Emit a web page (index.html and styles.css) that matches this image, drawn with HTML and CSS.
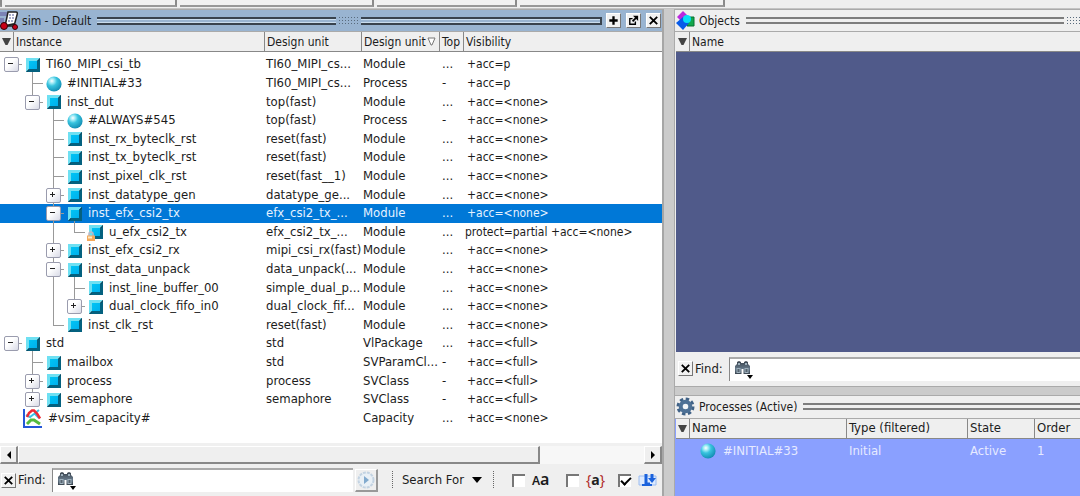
FILE: index.html
```html
<!DOCTYPE html>
<html lang="en">
<head>
<meta charset="utf-8">
<title>sim - Default</title>
<link rel="stylesheet" href="styles.css">
</head>
<body>
<svg class="defs" aria-hidden="true">
  <defs>
    <linearGradient id="face" x1="0" y1="0" x2="1" y2="1"><stop offset="0" stop-color="#00c4f4"/><stop offset="1" stop-color="#00b0ee"/></linearGradient>
    <radialGradient id="ball" cx=".36" cy=".3" r=".75"><stop offset="0" stop-color="#fff"/><stop offset=".22" stop-color="#9be9f5"/><stop offset=".45" stop-color="#38c3de"/><stop offset="1" stop-color="#1089b0"/></radialGradient>
    <linearGradient id="steel" x1="0" y1="0" x2="0" y2="1"><stop offset="0" stop-color="#39424c"/><stop offset=".6" stop-color="#66798a"/><stop offset="1" stop-color="#3a444e"/></linearGradient>
  </defs>
  <symbol id="cube" viewBox="0 0 14 14"><path fill="#6fe0f2" d="M0 0h14l-3 3H3v8l-3 3z"/><path fill="#04617f" d="M14 0v14H0l3-3h8V3z"/><path fill="#0a3b50" d="M0 14l3-3v1l-2 2zM14 0l-3 3h1l2-2z"/><path fill="url(#face)" d="M3 3h8v8H3z"/></symbol>
  <symbol id="sphere" viewBox="0 0 16 16"><circle cx="8" cy="8" r="7.6" fill="url(#ball)"/></symbol>
  <symbol id="lock" viewBox="0 0 10 10"><path d="M3 5V3a2 2 0 014 0v2" fill="none" stroke="#b9b9c9" stroke-width="1.6"/><path fill="#f5a95b" d="M1 4.5h8V10H1z"/><path fill="#ffe9c0" d="M2 5.5h4v2H2z"/></symbol>
  <symbol id="chart" viewBox="0 0 19 19"><path d="M1 0v18h18" fill="none" stroke="#2458d8" stroke-width="2"/><path d="M3 6l4 2 4-3 5-4M11 4l5 5" fill="none" stroke="#39c3e6" stroke-width="2"/><path d="M4 8l2-4 3-2.500h2l3 3 3 5" fill="none" stroke="#ee2a35" stroke-width="2.500"/><path d="M4 15l4-4h3l6 4" fill="none" stroke="#55bb3f" stroke-width="3"/></symbol>
  <symbol id="binoculars" viewBox="0 0 19 20"><path fill="url(#steel)" d="M3 2l2-1 2 1v1h3V2l2-1 2 1v2l2 2v8H9.500V9h-2v5H1V6l2-2z"/><path fill="#9fb1bd" d="M2.500 8h4v5h-4zM10.500 8h4v5h-4zM4 3h2v2H4zM11 3h2v2h-2z"/><path fill="#56636e" d="M3.500 9h2v3h-2zM11.500 9h2v3h-2z"/><path fill="#000" d="M13 15h6l-3 4z"/></symbol>
  <symbol id="cross" viewBox="0 0 14 14"><path d="M3 3l8 8M11 3l-8 8" stroke="#000" stroke-width="2"/></symbol>
  <symbol id="down" viewBox="0 0 9 9"><path fill="#444" d="M0 1h9L5.500 8h-2z"/></symbol>
</svg>

<div class="toolbars"><span class="bar b1"></span><span class="bar b2"></span><span class="bar b3"></span><span class="bar b4"></span><span class="bar b5"></span></div>

<main class="workspace">
  <section class="pane sim">
    <header class="title active">
      <svg class="title-icon" viewBox="0 0 19 19"><path fill="#7b83b5" d="M0 1h7v4H0zM0 7h4v5H0z"/><path fill="#fff" stroke="#222" stroke-width="1.500" d="M8 1h8q2 0 1 3l-3 11H5l2-9z"/><path d="M9 4h5M9 7h5M8 10h5" stroke="#8b92bb" stroke-width="1.500" stroke-dasharray="2 1"/><path d="M5 15l9-2" stroke="#222" stroke-width="2"/><circle cx="4" cy="15" r="3.500" fill="#c80018" stroke="#310008"/><circle cx="15" cy="16" r="2.500" fill="#c80018" stroke="#310008"/></svg>
      <h2>sim - Default</h2>
      <span class="groove"></span><span class="dots"></span><span class="groove"></span>
      <span class="window-buttons">
        <button aria-label="Zoom pane"><svg viewBox="0 0 14 14"><path d="M7 2.500v9M2.500 7h9" stroke="#000" stroke-width="2.500"/></svg></button>
        <button aria-label="Undock"><svg viewBox="0 0 14 14"><path d="M6 5H3v6h6V8" fill="none" stroke="#000" stroke-width="1.500"/><path d="M6 8l4-4" stroke="#000" stroke-width="2"/><path d="M6.500 2H12v5.500z"/></svg></button>
        <button aria-label="Close"><svg><use href="#cross"/></svg></button>
      </span>
    </header>
    <div class="sheet">
      <table class="tree">
        <colgroup><col class="c-mark"><col class="c-inst"><col class="c-unit"><col class="c-type"><col class="c-top"><col></colgroup>
        <thead><tr><th><svg class="mark"><use href="#down"/></svg></th><th>Instance</th><th>Design unit</th><th><span class="sorted">Design unit<svg viewBox="0 0 9 9"><path d="M1 1h7L5 8H4z" fill="#fff" stroke="#777"/></svg></span></th><th>Top</th><th>Visibility</th></tr></thead>
        <tbody>
          <tr><td colspan="2"><div class="node"><button class="tog minus last" aria-label="Collapse"></button><i class="ic open"><svg><use href="#cube"/></svg></i>TI60_MIPI_csi_tb</div></td><td>TI60_MIPI_cs...</td><td>Module</td><td>...</td><td>+acc=p</td></tr>
          <tr><td colspan="2"><div class="node"><i></i><i class="tee"></i><i class="ic ball"><svg><use href="#sphere"/></svg></i>#INITIAL#33</div></td><td>TI60_MIPI_cs...</td><td>Process</td><td>-</td><td>+acc=p</td></tr>
          <tr><td colspan="2"><div class="node"><i></i><button class="tog minus end" aria-label="Collapse"></button><i class="ic open"><svg><use href="#cube"/></svg></i>inst_dut</div></td><td>top(fast)</td><td>Module</td><td>...</td><td>+acc=&lt;none&gt;</td></tr>
          <tr><td colspan="2"><div class="node"><i></i><i></i><i class="tee"></i><i class="ic ball"><svg><use href="#sphere"/></svg></i>#ALWAYS#545</div></td><td>top(fast)</td><td>Process</td><td>-</td><td>+acc=&lt;none&gt;</td></tr>
          <tr><td colspan="2"><div class="node"><i></i><i></i><i class="tee"></i><i class="ic"><svg><use href="#cube"/></svg></i>inst_rx_byteclk_rst</div></td><td>reset(fast)</td><td>Module</td><td>...</td><td>+acc=&lt;none&gt;</td></tr>
          <tr><td colspan="2"><div class="node"><i></i><i></i><i class="tee"></i><i class="ic"><svg><use href="#cube"/></svg></i>inst_tx_byteclk_rst</div></td><td>reset(fast)</td><td>Module</td><td>...</td><td>+acc=&lt;none&gt;</td></tr>
          <tr><td colspan="2"><div class="node"><i></i><i></i><i class="tee"></i><i class="ic"><svg><use href="#cube"/></svg></i>inst_pixel_clk_rst</div></td><td>reset(fast__1)</td><td>Module</td><td>...</td><td>+acc=&lt;none&gt;</td></tr>
          <tr><td colspan="2"><div class="node"><i></i><i></i><button class="tog plus tee" aria-label="Expand"></button><i class="ic"><svg><use href="#cube"/></svg></i>inst_datatype_gen</div></td><td>datatype_ge...</td><td>Module</td><td>...</td><td>+acc=&lt;none&gt;</td></tr>
          <tr class="selected"><td colspan="2"><div class="node"><i></i><i></i><button class="tog minus tee" aria-label="Collapse"></button><i class="ic open"><svg><use href="#cube"/></svg></i>inst_efx_csi2_tx</div></td><td>efx_csi2_tx_...</td><td>Module</td><td>...</td><td>+acc=&lt;none&gt;</td></tr>
          <tr><td colspan="2"><div class="node"><i></i><i></i><i class="pass"></i><i class="end"></i><i class="ic"><svg><use href="#cube"/></svg><svg class="lock"><use href="#lock"/></svg></i>u_efx_csi2_tx</div></td><td>efx_csi2_tx_...</td><td>Module</td><td>...</td><td class="wide">protect=partial +acc=&lt;none&gt;</td></tr>
          <tr><td colspan="2"><div class="node"><i></i><i></i><button class="tog plus tee" aria-label="Expand"></button><i class="ic"><svg><use href="#cube"/></svg></i>inst_efx_csi2_rx</div></td><td>mipi_csi_rx(fast)</td><td>Module</td><td>...</td><td>+acc=&lt;none&gt;</td></tr>
          <tr><td colspan="2"><div class="node"><i></i><i></i><button class="tog minus tee" aria-label="Collapse"></button><i class="ic open"><svg><use href="#cube"/></svg></i>inst_data_unpack</div></td><td>data_unpack(...</td><td>Module</td><td>...</td><td>+acc=&lt;none&gt;</td></tr>
          <tr><td colspan="2"><div class="node"><i></i><i></i><i class="pass"></i><i class="tee"></i><i class="ic"><svg><use href="#cube"/></svg></i>inst_line_buffer_00</div></td><td>simple_dual_p...</td><td>Module</td><td>...</td><td>+acc=&lt;none&gt;</td></tr>
          <tr><td colspan="2"><div class="node"><i></i><i></i><i class="pass"></i><button class="tog plus end" aria-label="Expand"></button><i class="ic"><svg><use href="#cube"/></svg></i>dual_clock_fifo_in0</div></td><td>dual_clock_fif...</td><td>Module</td><td>...</td><td>+acc=&lt;none&gt;</td></tr>
          <tr><td colspan="2"><div class="node"><i></i><i></i><i class="end"></i><i class="ic"><svg><use href="#cube"/></svg></i>inst_clk_rst</div></td><td>reset(fast)</td><td>Module</td><td>...</td><td>+acc=&lt;none&gt;</td></tr>
          <tr><td colspan="2"><div class="node"><button class="tog minus last" aria-label="Collapse"></button><i class="ic open"><svg><use href="#cube"/></svg></i>std</div></td><td>std</td><td>VlPackage</td><td>...</td><td>+acc=&lt;full&gt;</td></tr>
          <tr><td colspan="2"><div class="node"><i></i><i class="tee"></i><i class="ic"><svg><use href="#cube"/></svg></i>mailbox</div></td><td>std</td><td>SVParamCl...</td><td>-</td><td>+acc=&lt;full&gt;</td></tr>
          <tr><td colspan="2"><div class="node"><i></i><button class="tog plus tee" aria-label="Expand"></button><i class="ic"><svg><use href="#cube"/></svg></i>process</div></td><td>process</td><td>SVClass</td><td>-</td><td>+acc=&lt;full&gt;</td></tr>
          <tr><td colspan="2"><div class="node"><i></i><button class="tog plus end" aria-label="Expand"></button><i class="ic"><svg><use href="#cube"/></svg></i>semaphore</div></td><td>semaphore</td><td>SVClass</td><td>-</td><td>+acc=&lt;full&gt;</td></tr>
          <tr><td colspan="2"><div class="node"><i></i><i class="ic chart"><svg><use href="#chart"/></svg></i>#vsim_capacity#</div></td><td></td><td>Capacity</td><td>...</td><td>+acc=&lt;none&gt;</td></tr>
        </tbody>
      </table>
    </div>
    <div class="scroll">
      <button aria-label="Scroll left"><svg viewBox="0 0 8 8"><path d="M6 0v8L2 4z"/></svg></button><span class="thumb"></span><span class="track"></span><button aria-label="Scroll right"><svg viewBox="0 0 8 8"><path d="M2 0v8l4-4z"/></svg></button>
    </div>
    <div class="find">
      <button class="close" aria-label="Close find"><svg><use href="#cross"/></svg></button>
      <label for="find-sim">Find:</label>
      <span class="field"><svg><use href="#binoculars"/></svg><input type="text" id="find-sim"></span>
      <button class="go" aria-label="Find next"><svg viewBox="0 0 18 18"><circle cx="9" cy="9" r="7.500" fill="#e9f0f6" stroke="#c3d3e2" stroke-width="2" stroke-dasharray="3 1"/><path fill="#82aace" d="M7 5l5 4-5 4z"/></svg></button>
      <span class="sep"></span>
      <button class="search-for">Search For<svg viewBox="0 0 10 6"><path d="M0 0h10L5 6z"/></svg></button>
      <span class="sep"></span>
      <label class="opt"><input type="checkbox" aria-label="Match case"><span class="case"><small>A</small>a</span></label>
      <label class="opt"><input type="checkbox" aria-label="Regular expression"><span class="regex"><em>{</em>a<em>}</em></span></label>
      <label class="opt"><input type="checkbox" checked aria-label="Wrap search"><svg class="wrap" viewBox="0 0 19 14"><path fill="#dceaff" stroke="#9bbcf0" d="M1 3h17v9H1z"/><path d="M8 1v10h4" fill="none" stroke="#1b62dc" stroke-width="3"/><path d="M4 12h10" stroke="#1b62dc" stroke-width="2"/><path d="M14 1v6" stroke="#1b62dc" stroke-width="3"/><path fill="#1b62dc" d="M10 5h8l-4 5z"/></svg></label>
    </div>
  </section>

  <div class="right">
    <section class="pane objects">
      <header class="title">
        <svg class="title-icon" viewBox="0 0 19 19"><path fill="#bb28dd" d="M7 0l6 6-6 6-6-6z"/><path fill="#13a84b" stroke="#087030" d="M11 6h7v9h-7z"/><path fill="#075be9" d="M7 6l6 6-6 7-7-7z"/><circle cx="11" cy="8" r="4" fill="#08dff5"/></svg>
        <h2>Objects</h2><span class="groove"></span><span class="dots short"></span>
      </header>
      <table class="list"><colgroup><col class="c-mark"><col></colgroup><thead><tr><th><svg class="mark"><use href="#down"/></svg></th><th>Name</th></tr></thead></table>
      <div class="canvas"></div>
      <div class="find">
        <button class="close" aria-label="Close find"><svg><use href="#cross"/></svg></button>
        <label for="find-obj">Find:</label>
        <span class="field"><svg><use href="#binoculars"/></svg><input type="text" id="find-obj"></span>
      </div>
    </section>
    <section class="pane processes">
      <header class="title">
        <svg class="title-icon" viewBox="0 0 19 19"><circle cx="9.500" cy="9.500" r="7.500" fill="none" stroke="#3f6186" stroke-width="3" stroke-dasharray="3.400 2.490"/><circle cx="9.500" cy="9.500" r="4.800" fill="#dce5ee" stroke="#4d7095" stroke-width="4"/><circle cx="9.500" cy="9.500" r="2.500" fill="#f4f6f8"/></svg>
        <h2>Processes (Active)</h2><span class="groove"></span>
      </header>
      <table class="list">
        <colgroup><col class="c-mark"><col class="p-name"><col class="p-type"><col class="p-state"><col></colgroup>
        <thead><tr><th><svg class="mark"><use href="#down"/></svg></th><th>Name</th><th>Type (filtered)</th><th>State</th><th>Order</th></tr></thead>
        <tbody><tr><td></td><td><div class="proc"><svg><use href="#sphere"/></svg>#INITIAL#33</div></td><td>Initial</td><td>Active</td><td>1</td></tr></tbody>
      </table>
    </section>
  </div>
</main>
</body>
</html>
```
FILE: styles.css
```css
* { box-sizing: border-box; }
body { margin: 0; height: 100vh; display: flex; flex-direction: column; overflow: hidden; background: #efefef; color: #1c1c1c; font: 12px/16px "DejaVu Sans Condensed", "Noto Sans", sans-serif; }
.defs { position: absolute; width: 0; height: 0; }
svg { display: block; flex: none; }
button { font: inherit; color: inherit; padding: 0; border: 0; background: none; }

.toolbars { display: flex; height: 9px; flex: none; gap: 3px; align-items: flex-start; border-bottom: 1px solid #c4c4c4; }
.bar { height: 7px; border-right: 2px solid #8a8a8a; border-bottom: 2px solid #999; background: #f2f2f2; }
.b1 { width: 2px; } .b2 { width: 172px; } .b3 { width: 194px; } .b4 { width: 140px; } .b5 { width: 205px; }

.workspace { flex: 1; min-height: 0; display: grid; grid-template-columns: 664fr 10px 406fr; background: #cbcbcb; }
.workspace > .right { grid-column: 3; }
.pane { display: flex; flex-direction: column; min-width: 0; background: #efefef; border-top: 1px solid #aaa; }
.sim { border-right: 2px solid #a6a6a6; }
.title { display: flex; align-items: center; height: 22px; flex: none; border-bottom: 1px solid #aaa; padding-left: 2px; }
.title h2 { margin: 0 6px 0 4px; font-size: 12px; font-weight: normal; white-space: nowrap; }
.title-icon { width: 19px; height: 19px; }
.active { background: #99b4d1; padding: 0 1px 0 0; }
.active h2 { margin-left: 3px; }
.groove { flex: 1; height: 7px; border: solid #7d7d7d; border-width: 2px 0; }
.active .groove { height: 8px; border-color: #39434e; border-right: 2px solid #39434e; background: linear-gradient(#c9dced 1px, transparent 1px, transparent 3px, #c9dced 3px); }
.active h2 + .groove { border-right: 0; }
.dots { width: 21px; height: 9px; margin: 0 2px; background: radial-gradient(circle, #596b7d 1px, transparent 1px) 0 0 / 3px 3px; }
.dots.short { width: 14px; margin-right: 0; }
.window-buttons { display: flex; gap: 5px; margin-left: 4px; }
.window-buttons button, .close { width: 15px; height: 15px; background: #f1f1f1; border: solid #fff; border-width: 1px; border-right-color: #777; border-bottom-color: #777; }
.window-buttons svg, .close svg { width: 13px; height: 13px; }

table { width: 100%; border-collapse: separate; border-spacing: 0; table-layout: fixed; flex: none; }
th { height: 20px; padding: 0 0 0 2px; font-weight: normal; text-align: left; white-space: nowrap; background: #efefef; border-left: 1px solid #888; border-bottom: 1px solid #888; }
th:first-child { border-left: 0; }
td { padding: 0 0 0 3px; white-space: nowrap; }
.c-mark { width: 13px; } .c-inst { width: 251px; } .c-unit { width: 97px; } .c-type { width: 78px; } .c-top { width: 24px; }
.mark { width: 9px; height: 9px; }
.sorted { display: flex; align-items: center; gap: 1px; }
.sorted svg { width: 9px; height: 9px; }

.sheet { flex: 1; min-height: 0; overflow: hidden; background: #fff; }
.tree tbody::before { content: ""; display: block; height: 3px; }
.tree tbody td { height: 19px; line-height: 18px; font-size: 13px; vertical-align: top; }
.tree tbody tr:nth-child(5n+3) td, .tree tbody tr:nth-child(5n) td { height: 18px; }
.tree tbody td:first-child { padding: 0 0 0 1px; height: 1px; }
.tree tbody td:nth-child(2) { padding-left: 2px; }
.tree tbody td:nth-child(3) { padding-left: 2px; }
.tree tbody td:nth-child(5) { padding-left: 4px; font-size: 12px; }
.tree tbody td.wide:last-child { padding-left: 2px; }
.tree tbody .selected td { color: #e6f2ff; background: #0078d7; }
.node { display: flex; align-items: stretch; height: 18px; }
.tree tbody tr:not(:nth-child(5n+3)):not(:nth-child(5n)) .node { height: 19px; }
.node > i, .tog { flex: none; width: 21px; position: relative; }
.node > .ic { display: flex; align-items: center; justify-content: center; width: 21px; margin-right: 3px; }
.ic svg { width: 14px; height: 14px; position: relative; }
.ic.ball svg { width: 16px; height: 16px; }
.node > .ic.chart { margin-right: 5px; }
.ic.chart svg { width: 19px; height: 19px; }
.ic svg.lock { position: absolute; width: 10px; height: 10px; left: 1px; bottom: 0; }
.pass { background: linear-gradient(#999, #999) 10px 0 / 1px 100% no-repeat; }
.tee { background: linear-gradient(#999, #999) 10px 0 / 1px 100% no-repeat, linear-gradient(#999, #999) 10px 9px / 11px 1px no-repeat; }
.end { background: linear-gradient(#999, #999) 10px 0 / 1px 10px no-repeat, linear-gradient(#999, #999) 10px 9px / 11px 1px no-repeat; }
.last { background: linear-gradient(#999, #999) 10px 9px / 14px 1px no-repeat; }
.open { background: linear-gradient(#999, #999) 10px 10px / 1px 10px no-repeat; }
.tog { display: flex; align-items: center; justify-content: center; }
.tog::before { content: ""; width: 13px; height: 13px; border: 1px solid #9a9cae; border-radius: 2px; background: linear-gradient(#222, #222) 3px 5px / 5px 1px no-repeat, linear-gradient(135deg, #fff 40%, #d8dae6); }
.tog.plus::before { background: linear-gradient(#222, #222) 3px 5px / 5px 1px no-repeat, linear-gradient(#222, #222) 5px 3px / 1px 5px no-repeat, linear-gradient(135deg, #fff 40%, #d8dae6); }

.scroll { display: flex; height: 21px; flex: none; border-top: 3px solid #f0f0f0; background: #f7f7f7; }
.scroll button { width: 18px; display: flex; align-items: center; justify-content: center; background: #efefef; border: 1px solid #fff; border-right: 2px solid #888; border-bottom: 2px solid #888; }
.scroll svg { width: 8px; height: 8px; }
.thumb { flex: 521; background: #efefef; border: 1px solid #fff; border-right: 2px solid #888; border-bottom: 2px solid #888; }
.track { flex: 105; }

.find { display: flex; align-items: center; height: 32px; flex: none; padding-left: 1px; font-size: 13px; }
.find > label { margin-left: 2px; }
.field { flex: 1; min-width: 0; display: flex; align-items: center; height: 24px; margin-left: 6px; background: #fff; border-top: 2px solid #aaa; border-left: 1px solid #888; }
.field svg { width: 19px; height: 20px; margin-left: 4px; }
.field input { flex: 1; min-width: 0; border: 0; outline: 0; background: none; font: inherit; }
.go { display: flex; align-items: center; justify-content: center; width: 23px; height: 23px; margin: 0 14px 0 2px; border: 1px solid #fff; border-right: 2px solid #999; border-bottom: 2px solid #999; }
.go svg { width: 18px; height: 18px; }
.sep { width: 1px; height: 18px; background: repeating-linear-gradient(#666 0 1px, transparent 1px 2px); }
.search-for { display: flex; align-items: center; gap: 8px; margin: 0 11px 0 9px; white-space: nowrap; }
.search-for svg { width: 10px; height: 6px; }
.find .opt { display: flex; align-items: center; gap: 7px; width: 40px; margin-left: 18px; }
.opt input { appearance: none; flex: none; width: 13px; height: 13px; margin: 0; background: #fff; border: solid #777; border-width: 2px 0 0 2px; }
.opt input:checked::before { content: ""; display: block; width: 8px; height: 4px; margin: 1px; border: solid #000; border-width: 0 0 2px 2px; transform: rotate(-45deg); }
.find .opt + .opt { margin-left: 14px; }
.find .opt:last-child { width: 44px; margin-left: 12px; }
.case { font: 600 16px/16px "Noto Sans", sans-serif; }
.case small { font-size: 12px; }
.regex { font: bold 14px/16px "Noto Sans", sans-serif; color: #222; }
.regex em { font-style: normal; font-weight: normal; color: #b02a2a; }
.wrap { width: 19px; height: 14px; }

.right { display: flex; flex-direction: column; min-width: 0; border-left: 1px solid #aaa; }
.right .title { padding-left: 1px; }
.objects { flex: 378; border-bottom: 1px solid #aaa; }
.objects .find { height: 34px; padding-left: 3px; }
.list, .canvas { margin-left: 1px; }
.list { width: calc(100% - 1px); }
.canvas { flex: 1; background: #505a8a; }
.processes { flex: 101; margin-top: 8px; background: #8aa0ff; }
.processes .title { background: #efefef; height: 23px; }
.processes .list { font-size: 13px; }
.processes td { height: 25px; color: #e6eaff; }
.p-name { width: 157px; } .p-type { width: 121px; } .p-state { width: 67px; }
.proc { display: flex; align-items: center; gap: 7px; padding-left: 8px; }
.proc svg { width: 16px; height: 16px; }
```
